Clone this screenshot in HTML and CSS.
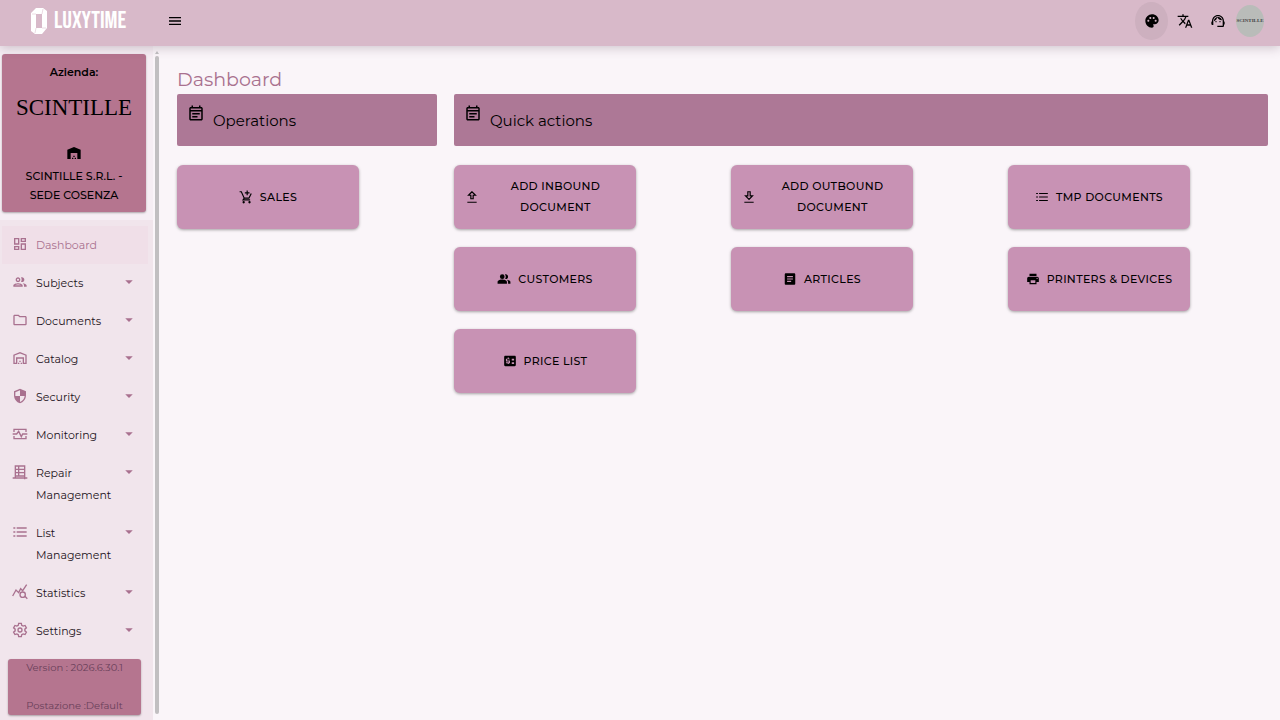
FILE: index.html
```html
<!DOCTYPE html>
<html lang="en">
<head>
  <meta charset="UTF-8" />
  <meta name="viewport" content="width=device-width, initial-scale=1.0" />
  <title>Dashboard</title>
  <link rel="stylesheet" href="styles.css">
</head>
<body>
  <svg class="sprite" aria-hidden="true">
    <symbol id="arrow" viewBox="0 0 24 24"><path d="M3 8h18l-9 9z"/></symbol>
    <symbol id="note" viewBox="0 0 24 24"><path d="M19 4h-1V2h-2v2H8V2H6v2H5c-1.100 0-2 .9-2 2v14c0 1.100.9 2 2 2h14c1.100 0 2-.9 2-2V6c0-1.100-.9-2-2-2zm0 16H5V10h14v10zm0-12H5V6h14v2zM7 12h10v2H7zm0 4h7v2H7z"/></symbol>
    <symbol id="list" viewBox="0 0 24 24"><path d="M2 5h3v2H2zm0 6h3v2H2zm0 6h3v2H2zM7 5h15v2H7zm0 6h15v2H7zm0 6h15v2H7z"/></symbol>
  </svg>

  <header class="topbar">
    <div class="brand">
      <svg class="brand-mark" viewBox="0 0 16 26"><path fill-rule="evenodd" d="M5 0h7l4 3v17l-5 6H4l-4-3V5zm0 6v14h6V6z"/><path class="brand-cut" d="M5 6H1M11 6l1-5M11 20h4M5 20l-1 5"/></svg>
      <span>LUXYTIME</span>
    </div>
    <button class="icon-btn" aria-label="Menu"><svg viewBox="0 0 24 24"><path d="M3 18h18v-2H3v2zm0-5h18v-2H3v2zm0-7v2h18V6H3z"/></svg></button>
    <div class="tools">
      <button class="icon-btn active" aria-label="Theme"><svg viewBox="0 0 24 24"><path d="M12 2C6.490 2 2 6.490 2 12s4.490 10 10 10c1.380 0 2.500-1.120 2.500-2.500 0-.61-.23-1.200-.64-1.670-.08-.1-.13-.21-.13-.33 0-.28.22-.5.5-.5H16c3.310 0 6-2.690 6-6 0-4.960-4.490-9-10-9zm5.500 11c-.83 0-1.500-.67-1.500-1.500s.67-1.500 1.500-1.500 1.500.67 1.500 1.500-.67 1.500-1.500 1.500zm-3-4c-.83 0-1.500-.67-1.500-1.500S13.670 6 14.500 6s1.500.67 1.500 1.500S15.330 9 14.500 9zM5 11.500c0-.83.67-1.500 1.500-1.500s1.500.67 1.500 1.500S7.330 13 6.500 13 5 12.330 5 11.500zm6-4c0 .83-.67 1.500-1.500 1.500S8 8.330 8 7.500 8.670 6 9.500 6s1.500.67 1.500 1.500z"/></svg></button>
      <button class="icon-btn" aria-label="Language"><svg viewBox="0 0 24 24"><path d="M12.870 15.070l-2.540-2.510.03-.03c1.740-1.940 2.980-4.170 3.710-6.530H17V4h-7V2H8v2H1v1.990h11.170C11.500 7.920 10.440 9.750 9 11.350 8.070 10.320 7.300 9.190 6.690 8h-2c.73 1.630 1.730 3.170 2.980 4.560l-5.090 5.020L4 19l5-5 3.110 3.110.76-2.040zM18.500 10h-2L12 22h2l1.120-3h4.750L21 22h2l-4.500-12zm-2.620 7l1.620-4.330L19.120 17h-3.240z"/></svg></button>
      <button class="icon-btn" aria-label="Support"><svg viewBox="0 0 24 24"><path d="M21 12.220C21 6.730 16.740 3 12 3c-4.690 0-9 3.650-9 9.280-.6.340-1 .98-1 1.720v2c0 1.100.9 2 2 2h1v-6.100c0-3.870 3.130-7 7-7s7 3.130 7 7V19h-8v2h8c1.100 0 2-.9 2-2v-1.220c.59-.31 1-.92 1-1.640v-2.300c0-.7-.41-1.310-1-1.620z"/><circle cx="9" cy="13" r="1"/><circle cx="15" cy="13" r="1"/><path d="M18 11.030C17.520 8.180 15.040 6 12.050 6c-3.030 0-6.290 2.510-6.030 6.450 2.470-1.010 4.330-3.210 4.860-5.890 1.310 2.630 4 4.440 7.120 4.470z"/></svg></button>
      <button class="avatar">SCINTILLE</button>
    </div>
  </header>

  <div class="layout">
    <aside class="sidebar">
      <div class="company">
        <strong>Azienda:</strong>
        <div class="company-logo">SCINTILLE</div>
        <svg viewBox="0 0 24 24"><path d="M22 21V7L12 3 2 7v14h5v-9h10v9h5zM11 19H9v2h2v-2zm2-3h-2v2h2v-2zm2 3h-2v2h2v-2z"/></svg>
        <div>SCINTILLE S.R.L. - SEDE COSENZA</div>
      </div>
      <nav>
        <a class="nav-item current" href="#"><svg viewBox="0 0 24 24"><path d="M19 5v2h-4V5h4M9 5v6H5V5h4m10 8v6h-4v-6h4M9 17v2H5v-2h4M21 3h-8v6h8V3zM11 3H3v10h8V3zm10 8h-8v10h8V11zm-10 4H3v6h8v-6z"/></svg><span>Dashboard</span></a>
        <a class="nav-item" href="#"><svg viewBox="0 0 24 24"><path d="M9 13.750c-2.340 0-7 1.170-7 3.500V19h14v-1.750c0-2.330-4.660-3.500-7-3.500zM4.340 17c.84-.58 2.870-1.250 4.660-1.250s3.820.67 4.660 1.250H4.340zM9 12c1.930 0 3.500-1.570 3.500-3.500S10.930 5 9 5 5.500 6.570 5.500 8.500 7.070 12 9 12zm0-5c.83 0 1.500.67 1.500 1.500S9.830 10 9 10s-1.500-.67-1.500-1.500S8.170 7 9 7zm7.040 6.810c1.160.84 1.960 1.960 1.960 3.440V19h4v-1.750c0-2.020-3.500-3.170-5.960-3.440zM15 12c1.930 0 3.500-1.570 3.500-3.500S16.930 5 15 5c-.54 0-1.040.13-1.500.35.63.89 1 1.980 1 3.150s-.37 2.260-1 3.150c.46.22.96.35 1.500.35z"/></svg><span>Subjects</span><svg class="caret"><use href="#arrow"/></svg></a>
        <a class="nav-item" href="#"><svg viewBox="0 0 24 24"><path d="M9.170 6l2 2H20v10H4V6h5.170M10 4H4c-1.100 0-2 .9-2 2v12c0 1.100.9 2 2 2h16c1.100 0 2-.9 2-2V8c0-1.100-.9-2-2-2h-8l-2-2z"/></svg><span>Documents</span><svg class="caret"><use href="#arrow"/></svg></a>
        <a class="nav-item" href="#"><svg viewBox="0 0 24 24"><path d="M20 8.350V19h-2v-8H6v8H4V8.350l8-3.200 8 3.200zM22 21V7L12 3 2 7v14h6v-8h8v8h6zm-11-2H9v2h2v-2zm2-3h-2v2h2v-2zm2 3h-2v2h2v-2z"/></svg><span>Catalog</span><svg class="caret"><use href="#arrow"/></svg></a>
        <a class="nav-item" href="#"><svg viewBox="0 0 24 24"><path d="M12 1L3 5v6c0 5.550 3.840 10.740 9 12 5.160-1.260 9-6.450 9-12V5l-9-4zm0 10.990h7c-.53 4.120-3.280 7.790-7 8.940V12H5V6.300l7-3.110v8.800z"/></svg><span>Security</span><svg class="caret"><use href="#arrow"/></svg></a>
        <a class="nav-item" href="#"><svg class="line" viewBox="0 0 24 24"><path d="M3 9V5h18v4M3 15v4h18v-4M1 12h6l3-4 4 8 2-4h7"/></svg><span>Monitoring</span><svg class="caret"><use href="#arrow"/></svg></a>
        <a class="nav-item" href="#"><svg class="line" viewBox="0 0 24 24"><path d="M5 2v19M19 2v21M5 3h14M5 8h14M5 13h14M5 18h14M1 21h22M10 3v15"/></svg><span>Repair Management</span><svg class="caret"><use href="#arrow"/></svg></a>
        <a class="nav-item" href="#"><svg><use href="#list"/></svg><span>List Management</span><svg class="caret"><use href="#arrow"/></svg></a>
        <a class="nav-item" href="#"><svg class="line" viewBox="0 0 24 24"><path d="M1 18 6 9l4 4 3-6 3 3 6-9M19 18l4 4"/><circle cx="16" cy="16" r="4"/></svg><span>Statistics</span><svg class="caret"><use href="#arrow"/></svg></a>
        <a class="nav-item" href="#"><svg class="line" viewBox="0 0 24 24"><path d="M10 2h4l.6 3 2.100 1.200 2.900-1 2 3.500-2.300 2v2.600l2.300 2-2 3.500-2.900-1-2.100 1.200-.6 3h-4l-.6-3-2.100-1.200-2.900 1-2-3.500 2.300-2v-2.600l-2.300-2 2-3.500 2.900 1L9.400 5z"/><circle cx="12" cy="12" r="3"/></svg><span>Settings</span><svg class="caret"><use href="#arrow"/></svg></a>
      </nav>
      <footer class="version">
        <span>Version : 2026.6.30.1</span>
        <span>Postazione :Default</span>
      </footer>
    </aside>
    <div class="scrollbar">
      <svg viewBox="0 0 4 3"><path d="M0 3h4L2 0z"/></svg>
      <div class="thumb"></div>
    </div>

    <main class="content">
      <h1>Dashboard</h1>
      <div class="columns">
        <section class="operations">
          <h2><svg><use href="#note"/></svg>Operations</h2>
          <div class="actions">
            <button class="action"><svg class="line" viewBox="0 0 24 24"><path d="M1 3h3l5 11h8l4-8M9 14l-2 3h12M14 1v8M10 5h8"/><circle cx="8" cy="21" r="1"/><circle cx="18" cy="21" r="1"/></svg><span>SALES</span></button>
          </div>
        </section>
        <section class="quick">
          <h2><svg><use href="#note"/></svg>Quick actions</h2>
          <div class="actions">
            <button class="action spread"><svg class="line" viewBox="0 0 24 24"><path d="M12 3 6 9h4v6h4V9h4zM4 21h16"/></svg><span>ADD INBOUND DOCUMENT</span></button>
            <button class="action spread"><svg class="line" viewBox="0 0 24 24"><path d="M12 16 6 10h4V3h4v7h4zM4 21h16"/></svg><span>ADD OUTBOUND DOCUMENT</span></button>
            <button class="action"><svg><use href="#list"/></svg><span>TMP DOCUMENTS</span></button>
            <button class="action"><svg viewBox="0 0 24 24"><circle cx="9" cy="8" r="4"/><path d="M1 20v-3c0-2.660 5.330-4 8-4s8 1.340 8 4v3zM15 4c2.210 0 4 1.790 4 4s-1.790 4-4 4c-.47 0-.91-.1-1.330-.24C14.500 10.740 15 9.430 15 8s-.5-2.740-1.330-3.760C14.090 4.100 14.530 4 15 4zM16.700 13.130C20 13.500 23 15 23 17v3h-4v-3c0-1.580-1-2.900-2.300-3.870z"/></svg><span>CUSTOMERS</span></button>
            <button class="action"><svg viewBox="0 0 24 24"><path d="M19 2H5c-1.100 0-2 .9-2 2v16c0 1.100.9 2 2 2h14c1.100 0 2-.9 2-2V4c0-1.100-.9-2-2-2zm-5 15H7v-2h7v2zm3-4H7v-2h10v2zm0-4H7V7h10v2z"/></svg><span>ARTICLES</span></button>
            <button class="action"><svg viewBox="0 0 24 24"><path d="M19 8H5c-1.660 0-3 1.340-3 3v6h4v4h12v-4h4v-6c0-1.660-1.340-3-3-3zm-3 11H8v-5h8v5zm3-7c-.55 0-1-.45-1-1s.45-1 1-1 1 .45 1 1-.45 1-1 1zm-1-9H6v4h12V3z"/></svg><span>PRINTERS &amp; DEVICES</span></button>
            <button class="action"><svg viewBox="0 0 24 24"><path fill-rule="evenodd" d="M20 3H4c-1.100 0-2 .9-2 2v14c0 1.100.9 2 2 2h16c1.100 0 2-.9 2-2V5c0-1.100-.9-2-2-2zM12 9H7v2h5v5h-2v1H8v-1H5v-2h5v-1H5V8h3V6h2v2h2zM15 8h4v3h-4zm0 6h4v3h-4z"/></svg><span>PRICE LIST</span></button>
          </div>
        </section>
      </div>
    </main>
  </div>
</body>
</html>
```

FILE: styles.css
```css
* {
  box-sizing: border-box;
}

body {
  margin: 0;
  min-height: 100vh;
  display: flex;
  flex-direction: column;
  background: #faf5f9;
  color: #000;
  font-family: Montserrat, Inter, sans-serif;
  font-size: 11px;
}

svg {
  flex: none;
  width: 16px;
  height: 16px;
  fill: currentColor;
}

.sprite {
  display: none;
}

.line {
  fill: none;
  stroke: currentColor;
  stroke-width: 2;
}

button {
  border: 0;
  padding: 0;
  background: none;
  color: inherit;
  font-family: inherit;
  cursor: pointer;
}

.topbar {
  position: relative;
  display: flex;
  align-items: center;
  height: 46px;
  padding: 0 16px 5px 31px;
  background: #d8b9c9;
  box-shadow: 0 2px 10px rgba(80, 50, 70, 0.25);
}

.brand {
  display: flex;
  align-items: center;
  gap: 7px;
  width: 127px;
  color: #fff;
  font: 24px/28px "Bebas Neue", "Oswald", "Roboto Condensed", sans-serif;
}

.brand-mark {
  width: 16px;
  height: 26px;
}

.brand-cut {
  fill: none;
  stroke: #ecdce4;
  stroke-width: 1;
}

.icon-btn {
  display: grid;
  place-items: center;
  width: 33px;
  height: 38px;
  border-radius: 50%;
}

.icon-btn.active {
  background: #cdb0bf;
}

.tools {
  display: flex;
  align-items: center;
  margin-left: auto;
}

.avatar {
  display: flex;
  align-items: center;
  justify-content: center;
  width: 28px;
  height: 32px;
  margin-left: 2px;
  border-radius: 50%;
  background: #b9bcb9;
  color: #444;
  font: bold 5px "Liberation Serif", serif;
}

.layout {
  flex: 1;
  display: flex;
}

.sidebar {
  width: 153px;
  padding-top: 8px;
  background: linear-gradient(#f6eef4 174px, #f1e5ec 174px);
}

.company {
  display: flex;
  flex-direction: column;
  align-items: center;
  height: 158px;
  margin: 0 7px 14px 2px;
  padding: 9px 16px 7px;
  border-radius: 3px;
  background: #b5758f;
  box-shadow: 0 1px 2px rgba(0, 0, 0, 0.3);
  font-weight: 500;
  line-height: 19px;
  text-align: center;
}

.company strong {
  font-weight: 600;
}

.company-logo {
  margin: 11px 0 22px;
  font: 23px/30px "Liberation Serif", serif;
}

.company svg {
  margin-bottom: 6px;
}

.nav-item {
  display: flex;
  gap: 8px;
  margin: 0 5px 0 2px;
  padding: 8px 14px 8px 10px;
  color: #1c1220;
  line-height: 22px;
  text-decoration: none;
}

.nav-item span {
  flex: 1;
}

.nav-item svg {
  margin-top: 2px;
  color: #a9718f;
}

.nav-item .caret {
  width: 10px;
  height: 10px;
  margin-top: 5px;
}

.nav-item.current {
  background: #f0dfe8;
}

.nav-item.current span {
  color: #a9718f;
}

.version {
  display: flex;
  flex-direction: column;
  justify-content: space-between;
  height: 56px;
  margin: 9px 12px 4px 8px;
  border-radius: 3px;
  background: #b5758f;
  box-shadow: 0 1px 2px rgba(0, 0, 0, 0.3);
  color: #69405a;
  font-size: 10px;
  line-height: 18px;
  text-align: center;
}

.scrollbar {
  display: flex;
  flex-direction: column;
  gap: 2px;
  width: 4px;
  margin: 5px 1px 6px 2px;
  color: #c1bfc1;
}

.scrollbar svg {
  width: 4px;
  height: 3px;
}

.thumb {
  flex: 1;
  border-radius: 2px;
  background: #c1bfc1;
}

.content {
  flex: 1;
  padding: 19px 12px 20px 17px;
}

h1 {
  margin: 0;
  color: #a9718f;
  font-size: 19px;
  font-weight: 400;
  line-height: 29px;
}

.columns {
  display: grid;
  grid-template-columns: repeat(4, 1fr);
  gap: 17px;
}

.quick {
  grid-column: span 3;
}

h2 {
  display: flex;
  align-items: center;
  gap: 8px;
  height: 52px;
  margin: 0 0 19px;
  padding: 0 10px;
  border-radius: 2px;
  background: #ad7896;
  font-size: 15px;
  font-weight: 400;
}

h2 svg {
  width: 18px;
  height: 18px;
  margin-bottom: 14px;
}

.actions {
  display: grid;
  grid-template-columns: 1fr;
  gap: 18px 17px;
}

.quick .actions {
  grid-template-columns: repeat(3, 1fr);
}

.action {
  display: flex;
  align-items: center;
  justify-content: center;
  gap: 7px;
  width: 70%;
  min-height: 64px;
  padding: 0 11px;
  border-radius: 6px;
  background: #c892b4;
  box-shadow: 0 1px 3px rgba(0, 0, 0, 0.35);
  font-size: 11px;
  font-weight: 500;
  letter-spacing: 0.03em;
  line-height: 21px;
}

.action svg {
  width: 14px;
  height: 14px;
}

.spread span {
  flex: 1;
  padding: 0 15px;
}
```
